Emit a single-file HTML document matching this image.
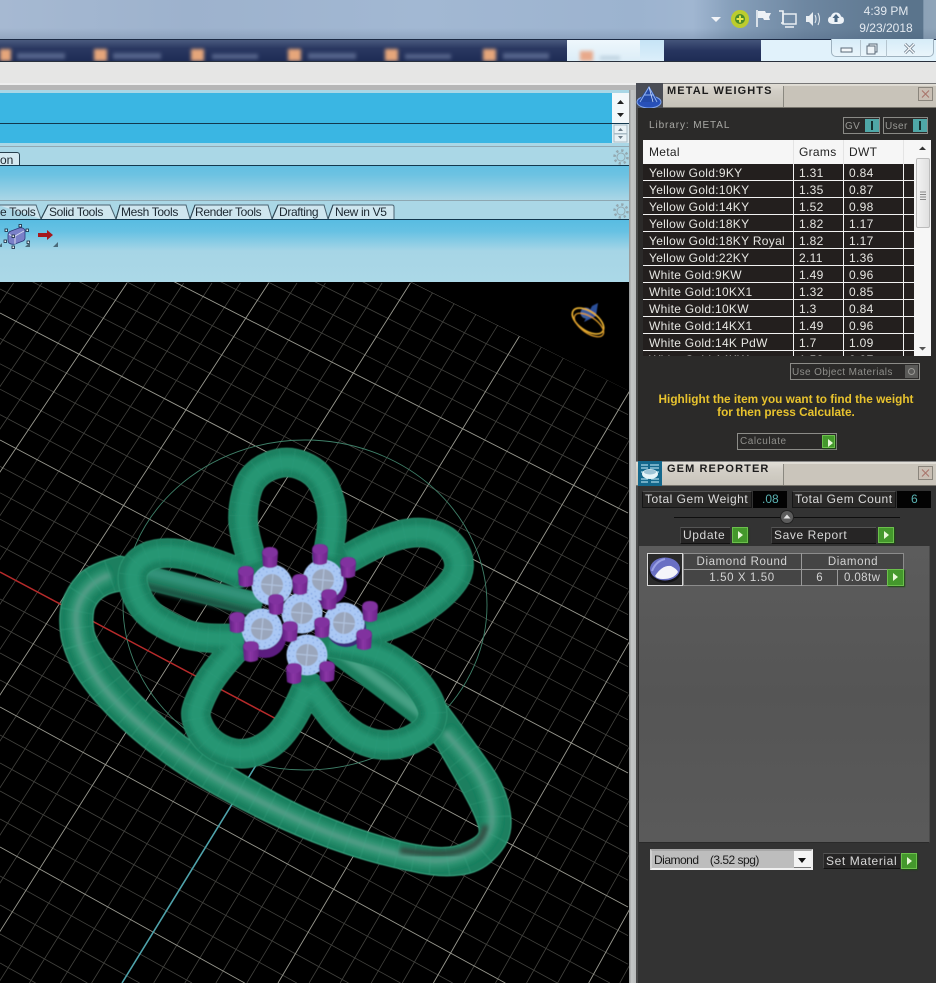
<!DOCTYPE html>
<html lang="en">
<head>
<meta charset="utf-8">
<title>Metal Weights and Gem Reporter</title>
<style>
html,body{margin:0;padding:0;background:#333;width:936px;height:983px;overflow:hidden}
#p{position:relative;width:936px;height:983px;overflow:hidden;background:#333;font-family:"Liberation Sans",Arial,sans-serif}
.b{position:absolute}
.t{position:absolute;white-space:nowrap;line-height:14px}
.tab{position:absolute;top:205px;height:14px;line-height:15px;font-size:12px;color:#1c2730;white-space:nowrap;letter-spacing:-.35px}
.r{position:absolute;white-space:nowrap;font-size:12px;letter-spacing:.3px;color:#e6e6e2;line-height:14px}
.sep{position:absolute;left:643px;width:271px;height:1px;background:#f2f2f2}
.col{position:absolute;top:164px;height:192px;width:1px;background:#f2f2f2}
.g{position:absolute;width:14px;height:14px;background:#44982c;border:1px solid #6cc04c;box-shadow:1px 1px 1px #1d4a14}
.g:after{content:"";position:absolute;left:5px;top:3px;border-left:5px solid #e8f8d8;border-top:4px solid transparent;border-bottom:4px solid transparent}
.bt{position:absolute;background:#262525;border-top:1px solid #555;border-left:1px solid #444;border-bottom:1px solid #111;color:#d8d8d8;font-size:12px;letter-spacing:.6px;line-height:15px;white-space:nowrap;padding-left:2px;box-sizing:border-box}
</style>
</head>
<body>
<div id="p">

<!-- desktop / taskbar -->
<div class="b" style="left:0;top:0;width:936px;height:39px;background:linear-gradient(90deg,#a6b9d2 0,#9db2cd 20%,#a2b8d3 45%,#9cb3cf 68%,#a0b6d1 74%,#87a0bb 78%,#6e87a1 86%,#5a748c 97%,#5a748c 98.6%,#8ca2b7 98.7%,#8fa4b8 100%)"></div>
<div class="b" style="left:0;top:28px;width:936px;height:11px;background:linear-gradient(180deg,rgba(90,110,140,0),rgba(60,80,110,.18))"></div>
<div class="b" style="left:0;top:39px;width:936px;height:1px;background:#1b2a44"></div>

<svg class="b" style="left:705px;top:6px" width="145" height="26" viewBox="0 0 145 26">
  <path d="M6 11h10l-5 5z" fill="#f2f4f8"/>
  <circle cx="35" cy="13" r="9" fill="#bccc2e"/>
  <circle cx="35" cy="13" r="5" fill="#4a8a2a"/>
  <path d="M31.500 13h7M35 9.500v7" stroke="#e9e94a" stroke-width="1.900"/>
  <path d="M52 4v17" stroke="#eef2f6" stroke-width="1.600"/>
  <path d="M53 5h7l1 2h5l-2 4 1 3h-6l-1-2h-5z" fill="#eef2f6"/>
  <rect x="78" y="8" width="13" height="10" fill="none" stroke="#e8edf2" stroke-width="1.500"/>
  <path d="M74 5h4v12h-2M80 21h9" stroke="#eef2f6" stroke-width="1.600" fill="none"/>
  <path d="M101 10h3l4-4v14l-4-4h-3z" fill="#e8edf2"/>
  <path d="M110 9q2 4 0 8M113 7q3 6 0 12" stroke="#dfe6ec" stroke-width="1.100" fill="none"/>
  <g transform="translate(4 0)">
  <path d="M125 18q-6 0-6-4 0-3 3-3.500 1-4 5-4 4 0 5 4 3 .5 3 3.500 0 4-5 4z" fill="#eef3f8"/>
  <path d="M127 8l3.500 4h-2v4h-3v-4h-2z" fill="#4b6884"/>
  </g>
</svg>
<div class="t" style="left:846px;top:4px;width:80px;text-align:center;font-size:12px;color:#e3e9f0">4:39 PM</div>
<div class="t" style="left:846px;top:21px;width:80px;text-align:center;font-size:12px;color:#e3e9f0">9/23/2018</div>

<!-- browser tab strip -->
<div class="b" style="left:0;top:40px;width:936px;height:21px;background:#e1f2fb"></div>
<div class="b" style="left:0;top:40px;width:567px;height:21px;background:linear-gradient(180deg,#4a5a7e 0,#2a3861 40%,#1e2c55 100%)"></div>
<div class="b" style="left:664px;top:40px;width:97px;height:21px;background:linear-gradient(180deg,#44547a,#27355f 50%,#1e2c55)"></div>
<div class="b" style="left:567px;top:40px;width:73px;height:21px;background:linear-gradient(180deg,#eef7fc,#dcedf7)"></div>
<div class="b" style="left:640px;top:40px;width:24px;height:21px;background:linear-gradient(180deg,#c6e4f6,#dceffa)"></div>
<svg class="b" style="left:0;top:40px" width="640" height="21" viewBox="0 0 640 21">
  <defs><filter id="bl2" x="-5%" y="-30%" width="110%" height="160%"><feGaussianBlur stdDeviation="1.800"/></filter></defs>
  <g filter="url(#bl2)">
    <g fill="#e6a67a">
      <rect x="0" y="9" width="11" height="12"/><rect x="94" y="9" width="13" height="12"/><rect x="191" y="9" width="13" height="12"/><rect x="288" y="9" width="13" height="12"/><rect x="385" y="9" width="13" height="12"/><rect x="483" y="9" width="13" height="12"/>
    </g>
    <rect x="580" y="11" width="13" height="10" fill="#e8a98a"/>
    <rect x="600" y="16" width="20" height="4" fill="#bfd3e0"/>
    <g fill="#55648a">
      <rect x="17" y="13" width="48" height="6"/><rect x="113" y="13" width="48" height="6"/><rect x="212" y="14" width="46" height="5"/><rect x="308" y="13" width="48" height="6"/><rect x="405" y="14" width="46" height="5"/><rect x="503" y="13" width="46" height="6"/>
    </g>
  </g>
</svg>
<div class="b" style="left:831px;top:39px;width:103px;height:18px;box-sizing:border-box;background:linear-gradient(180deg,#d6ecf8,#eaf5fb);border:1px solid #9fb2bf;border-top:0;border-radius:0 0 5px 5px"></div>
<div class="b" style="left:860px;top:40px;width:1px;height:17px;background:#b5c5cf"></div>
<div class="b" style="left:886px;top:40px;width:1px;height:17px;background:#b5c5cf"></div>
<svg class="b" style="left:836px;top:40px" width="90" height="17" viewBox="0 0 90 17">
  <rect x="5" y="8" width="11" height="4" fill="#f4f8fa" stroke="#5b6a78"/>
  <rect x="33" y="4" width="8" height="8" fill="#eef4f8" stroke="#5b6a78"/>
  <rect x="31" y="6" width="8" height="8" fill="#eef4f8" stroke="#5b6a78"/>
  <path d="M69 4l9 9M78 4l-9 9" stroke="#6b7a88" stroke-width="3"/>
  <path d="M69 4l9 9M78 4l-9 9" stroke="#f6f9fb" stroke-width="1.400"/>
</svg>
<div class="b" style="left:0;top:61px;width:936px;height:1px;background:#28303c"></div>
<div class="b" style="left:0;top:62px;width:636px;height:23px;background:#e6e6e5"></div>
<div class="b" style="left:636px;top:62px;width:300px;height:21px;background:#e6e6e5"></div>

<!-- ribbon -->
<div class="b" style="left:0;top:83px;width:636px;height:7px;background:linear-gradient(180deg,#eee 0,#eee 25%,#b6b6b6 30%,#b6b6b6 100%)"></div>
<div class="b" style="left:0;top:90px;width:630px;height:192px;background:#aad7e6"></div>
<div class="b" style="left:0;top:93px;width:612px;height:50px;background:#3ab6e3"></div>
<div class="b" style="left:0;top:123px;width:629px;height:1px;background:#12384e"></div>
<div class="b" style="left:612px;top:93px;width:17px;height:30px;background:#f4f8fa"></div>
<div class="b" style="left:612px;top:124px;width:17px;height:19px;background:#dfeef4"></div>
<svg class="b" style="left:612px;top:93px" width="17" height="50" viewBox="0 0 17 50">
  <path d="M5 11l3.500-4 3.500 4z" fill="#222"/><path d="M5 20l3.500 4 3.500-4z" fill="#222"/>
  <rect x="2" y="32" width="13" height="8.500" fill="#e9f2f6" stroke="#a9bcc6"/>
  <rect x="2" y="41" width="13" height="8" fill="#e9f2f6" stroke="#a9bcc6"/>
  <path d="M6 38l2.500-3 2.500 3z" fill="#6b7a86"/><path d="M6 43l2.500 3 2.500-3z" fill="#6b7a86"/>
</svg>
<div class="b" style="left:0;top:146px;width:629px;height:1px;background:#8fa8b3"></div>
<div class="b" style="left:0;top:165px;width:629px;height:1px;background:#12384e"></div>
<div class="b" style="left:0;top:166px;width:629px;height:34px;background:linear-gradient(180deg,#62bfe2,#6cc2e2 25%,#a2d3e5 90%,#aad7e6)"></div>
<div class="b" style="left:0;top:200px;width:629px;height:1px;background:#8ea7b1"></div>
<div class="b" style="left:0;top:219px;width:629px;height:1px;background:#12384e"></div>
<div class="b" style="left:0;top:220px;width:629px;height:62px;background:linear-gradient(180deg,#58bce2 0,#66c1e3 18%,#a6d5e6 50%,#abd8e7 100%)"></div>

<!-- tabs -->
<div class="b" style="left:-4px;top:152px;width:24px;height:13px;box-sizing:border-box;background:#d4e9f1;border:1px solid #27404e;border-bottom:0;border-radius:0 3px 0 0"></div>
<div class="t" style="left:0;top:153px;font-size:12px;color:#1c2730">on</div>
<svg class="b" style="left:0;top:204px" width="400" height="16" viewBox="0 0 400 16">
  <path d="M-2 1H36L41 15M41 15L48 1H110L116 15M116 15L120 1H186L190 15M190 15L195 1H268L272 15M272 15L278 1H324L328 15M328 15L333 1H392Q394 1 394 3V15" fill="#cfe6ef" stroke="#4a6270"/>
  <path d="M41 15L48 1M116 15L120 1M190 15L195 1M272 15L278 1M328 15L333 1" fill="none" stroke="#2c4452"/>
</svg>
<div class="tab" style="left:0">e Tools</div>
<div class="tab" style="left:49px">Solid Tools</div>
<div class="tab" style="left:121px">Mesh Tools</div>
<div class="tab" style="left:195px">Render Tools</div>
<div class="tab" style="left:279px">Drafting</div>
<div class="tab" style="left:335px">New in V5</div>

<!-- gears -->
<svg class="b" style="left:612px;top:148px" width="18" height="74" viewBox="0 0 18 74">
  <g fill="none" stroke="#93a8b0">
    <circle cx="9" cy="9" r="4"/><circle cx="9" cy="9" r="6.500" stroke-width="2.500" stroke-dasharray="2.300 2.800"/>
    <circle cx="9" cy="63" r="4"/><circle cx="9" cy="63" r="6.500" stroke-width="2.500" stroke-dasharray="2.300 2.800"/>
  </g>
</svg>

<!-- toolbar icons -->
<svg class="b" style="left:0;top:222px" width="62" height="30" viewBox="0 0 62 30">
  <path d="M8 13q0-3 3-4l8-3q4-1 6 2v8q0 2-2 3l-8 3q-3 1-6-1-1-1-1-3z" fill="#7a80c8" stroke="#2d3a7a" stroke-width=".8"/>
  <path d="M9 12q3 3 6 2l9-5M15 14v8" fill="none" stroke="#d4d8f0" stroke-width="1"/>
  <g fill="#e6f3f8" stroke="#12233a" stroke-width=".8">
    <rect x="19" y="2.500" width="2.500" height="2.500"/><rect x="26" y="7" width="2.500" height="2.500"/><rect x="27" y="19" width="2.500" height="2.500"/><rect x="12" y="24" width="2.500" height="2.500"/><rect x="5" y="7" width="2.500" height="2.500"/><rect x="4" y="18" width="2.500" height="2.500"/><rect x="12" y="13" width="2.500" height="2.500"/>
  </g>
  <path d="M38 11h9V8l6 5-6 5v-3h-9z" fill="#a5181c"/>
  <path d="M25 25h5v-5zM53 25h5v-5z" fill="#4a6a7a"/>
  <path d="M0 25h2v-4l-2 2z" fill="#4a6a7a"/>
</svg>

<!-- right strip -->
<div class="b" style="left:629px;top:90px;width:7px;height:893px;background:linear-gradient(90deg,#8f9292,#c4c7c7 35%,#b8baba 100%)"></div>

<!-- viewport -->
<svg class="b" style="left:0;top:282px" width="629" height="701" viewBox="0 282 629 701">
  <defs>
    <clipPath id="gc"><polygon points="0,282 411,282 629,391 629,983 0,983"/></clipPath>
    <filter id="soft" x="-5%" y="-5%" width="110%" height="110%"><feGaussianBlur stdDeviation=".45"/></filter>
    <filter id="gsoft" x="-5%" y="-5%" width="110%" height="110%"><feGaussianBlur stdDeviation=".35"/></filter>
    <filter id="hb" x="-10%" y="-10%" width="120%" height="120%"><feGaussianBlur stdDeviation="2.500"/></filter>
    <linearGradient id="pr" x1="0" x2="1" y1="0" y2="0"><stop offset="0" stop-color="#5d2080"/><stop offset=".45" stop-color="#8a35a5"/><stop offset="1" stop-color="#6a2488"/></linearGradient>
    <path id="pet" d="M253,563Q243,533 243,518Q243,503 248,488Q253,473 270,466Q287,459 303,466Q320,473 326,490Q333,507 332,520Q332,533 327,557M349,558Q380,540 400,535Q420,530 434,535Q449,540 456,553Q463,567 454,580Q445,593 428,605Q412,617 395,623Q378,630 355,635M240,573Q200,557 180,554Q160,551 147,557Q135,563 133,573Q131,583 137,596Q143,610 156,619Q170,628 186,634Q203,640 245,638M237,647Q213,673 205,689Q197,705 196,712Q195,720 202,732Q210,745 226,751Q243,757 259,750Q275,743 286,727Q297,712 307,687M330,643Q373,650 390,660Q407,670 421,688Q435,707 432,718Q430,730 416,737Q403,745 386,745Q370,745 355,736Q340,727 330,713Q320,700 310,687"/>
    <path id="bandS" d="M120,556Q90,563 78,575Q67,587 62,602Q58,617 61,637Q65,657 77,677Q90,697 111,718Q133,740 158,758Q183,777 215,795Q247,813 280,828Q313,843 346,854Q380,865 410,871Q440,878 460,875Q480,873 493,860Q507,847 510,833Q513,820 508,801Q503,783 491,766Q480,750 445,703L425,730L437,747Q462,790 471,808Q480,827 479,832Q478,837 464,843Q450,850 425,846Q400,843 356,828Q313,813 276,793Q240,773 211,755Q183,737 158,713Q133,690 115,666Q97,643 94,631Q92,620 94,610Q97,600 107,595Q117,590 140,590L140,560Z"/>
    <path id="bandC" d="M110,575Q95,580 86,591Q77,603 76,616Q76,630 80,645Q85,660 98,680Q112,700 135,720Q158,740 185,758Q212,777 246,794Q280,812 312,826Q345,840 377,849Q410,858 427,860Q445,862 461,856Q478,850 486,837Q495,825 491,807Q488,790 479,775Q470,760 445,732"/>
    <clipPath id="bc"><use href="#bandS"/></clipPath>
    <g id="prong">
      <path d="M-8,-3Q-8,-9 0,-9Q8,-9 8,-3L7,10Q0,14 -7,10Z" fill="url(#pr)"/>
      <ellipse cx="0" cy="-3.500" rx="7.500" ry="5" fill="#81309f"/>
    </g>
    <g id="stone">
      <circle r="20.500" fill="#aac8f4"/>
      <circle r="18" fill="none" stroke="#7fa3e0" stroke-width="1.400" stroke-dasharray="1.500 3.500"/>
      <circle r="14" fill="none" stroke="#7fa3e0" stroke-width="1.200" stroke-dasharray="1 5"/>
      <circle r="11" fill="#9aa6bc"/>
      <path d="M-11,-1L11,1M1,-11L-1,11" stroke="#b0c2de" stroke-width="1.200"/>
    </g>
  </defs>
  <rect x="0" y="282" width="629" height="701" fill="#000"/>
  <g clip-path="url(#gc)" fill="none">
    <g filter="url(#gsoft)">
    <path stroke="#42423e" stroke-width=".8" d="M13.600,283L-467.700,983M42,283L-436.600,983M70.300,283L-405.500,983M98.700,283L-374.500,983M155.300,283L-312.300,983M183.700,283L-281.300,983M212,283L-250.200,983M240.400,283L-219.100,983M297,283L-157,983M325.400,283L-125.900,983M353.700,283L-94.800,983M382.100,283L-63.800,983M438.700,283L-1.600,983M467.100,283L29.400,983M495.400,283L60.500,983M523.800,283L91.600,983M580.400,283L153.700,983M608.800,283L184.800,983M637.100,283L215.900,983M665.500,283L246.900,983M722.100,283L309.100,983M750.500,283L340.100,983M778.800,283L371.200,983M807.200,283L402.300,983M863.800,283L464.400,983M892.200,283L495.500,983M920.500,283L526.600,983M948.900,283L557.600,983M1005.500,283L619.800,983"/>
    <path stroke="#42423e" stroke-width=".8" d="M0,100.200L628,414.600M0,123.400L628,439.200M0,146.600L628,463.800M0,169.800L628,488.400M0,217L628,538.400M0,241L628,563.800M0,265L628,589.200M0,289L628,614.600M0,338.400L628,666.600M0,363.800L628,693.200M0,389.200L628,719.800M0,414.600L628,746.400M0,466.400L628,799.800M0,492.800L628,826.600M0,519.200L628,853.400M0,545.600L628,880.200M0,599L628,935.600M0,626L628,964.200M0,653L609.900,983M0,680L557.400,983M0,735L452.700,983M0,763L400.500,983M0,791L348.500,983M0,819L296.800,983M0,876L192,983M0,905L139.600,983M0,934L87.400,983M0,963L35.600,983"/>
    <path stroke="#9a9a90" stroke-width=".9" d="M127,283L-343.400,983M268.700,283L-188,983M410.400,283L-32.700,983M552.100,283L282.600,722M693.800,283L278,983M835.500,283L433.400,983M977.200,283L588.700,983M0,77L628,390M0,193L628,513M0,313L628,640M0,440L628,773M282,722L628,907M0,707L505.300,983M0,847L244.700,983"/>
    </g>
    <path stroke="#b62a2a" stroke-width="1.500" d="M0,572L282,722"/>
    <path stroke="#4fa3ab" stroke-width="1.600" d="M282.600,722L122,983"/>
  </g>
  <ellipse cx="305" cy="605" rx="182" ry="165" fill="none" stroke="#3f8069" stroke-width=".9"/>

  <g fill="none" stroke-linejoin="round" filter="url(#soft)">
    <!-- back band segments -->
    <path d="M132,574L262,606" stroke="#237f61" stroke-width="24"/>
    <path d="M132,568L262,600" stroke="#33937a" stroke-width="9" filter="url(#hb)"/>
    <path d="M132,583L262,615" stroke="#1d4f40" stroke-width="6" filter="url(#hb)"/>
    <path d="M455,738L325,640" stroke="#1b7f5e" stroke-width="28"/>
    <path d="M455,738L325,640" stroke="#46a185" stroke-width="11" filter="url(#hb)"/>

    <!-- band -->
    <use href="#bandS" fill="#1a7f5e" stroke="#3aa883" stroke-width="1"/>
    <g clip-path="url(#bc)">
      <use href="#bandC" stroke="#2a9270" stroke-width="17" filter="url(#hb)"/>
      <use href="#bandC" stroke="#5a9f8b" stroke-width="5" filter="url(#hb)"/>
      <use href="#bandC" stroke="#45b08e" stroke-width="48" stroke-dasharray="1 16" opacity=".3"/>
      <path d="M400,850Q450,858 470,847Q484,840 485,825" stroke="#33483f" stroke-width="6" filter="url(#hb)"/>
    </g>
    <!-- petals -->
    <use href="#pet" stroke="#38a881" stroke-width="29.500" stroke-linecap="round"/>
    <use href="#pet" stroke="#1b8060" stroke-width="28.500" stroke-linecap="round"/>
    <use href="#pet" stroke="#279673" stroke-width="15" filter="url(#hb)"/>
    <use href="#pet" stroke="#36a582" stroke-width="27" stroke-dasharray="1 11" opacity=".22"/>
  </g>

  <!-- stones -->
  <g filter="url(#soft)">
    <ellipse cx="265" cy="638" rx="21" ry="20" fill="#5c1a80"/>
    <ellipse cx="326" cy="586" rx="21" ry="20" fill="#5c1a80"/>
    <ellipse cx="346" cy="628" rx="20" ry="19" fill="#3a2a7a"/>
    <use href="#stone" x="272" y="585"/>
    <use href="#stone" x="323" y="580"/>
    <use href="#stone" x="302" y="613"/>
    <use href="#stone" x="262" y="629"/>
    <use href="#stone" x="344" y="623"/>
    <use href="#stone" x="307" y="655"/>
    <use href="#prong" x="270" y="556"/>
    <use href="#prong" x="246" y="575"/>
    <use href="#prong" x="320" y="553"/>
    <use href="#prong" x="348" y="566"/>
    <use href="#prong" x="300" y="583"/>
    <use href="#prong" x="276" y="603"/>
    <use href="#prong" x="329" y="598"/>
    <use href="#prong" x="370" y="610"/>
    <use href="#prong" x="237" y="621"/>
    <use href="#prong" x="290" y="630"/>
    <use href="#prong" x="322" y="626"/>
    <use href="#prong" x="364" y="638"/>
    <use href="#prong" x="251" y="650"/>
    <use href="#prong" x="294" y="672"/>
    <use href="#prong" x="327" y="670"/>
  </g>

  <!-- mini ring -->
  <g fill="none" filter="url(#soft)">
    <path d="M584,322L592,306L598,303L596,316Z" fill="#2c4f9a"/>
    <circle cx="586" cy="313" r="5.500" fill="#3a5f9e"/>
    <ellipse cx="588" cy="321" rx="18" ry="9.500" transform="rotate(35 588 321)" stroke="#e8b030" stroke-width="1.700"/>
    <ellipse cx="589" cy="325" rx="17" ry="8" transform="rotate(35 589 325)" stroke="#d9982a" stroke-width="1.300"/>
  </g>
</svg>

<!-- METAL WEIGHTS header -->
<div class="b" style="left:636px;top:83px;width:300px;height:25px;background:linear-gradient(180deg,#e1ded6,#d2cec6 30%,#c6c2b8);border-top:1px solid #777;box-sizing:border-box;border-bottom:1px solid #77746c"></div>
<div class="b" style="left:783px;top:86px;width:153px;height:21px;background:#c8c3b9;border-left:1px solid #8a8880;box-sizing:border-box"></div>
<svg class="b" style="left:636px;top:83px" width="27" height="26" viewBox="0 0 27 26">
  <rect width="27" height="26" fill="#4a4d55"/>
  <ellipse cx="13" cy="19" rx="12" ry="6" fill="#2850b8" stroke="#7fa4ee"/>
  <path d="M2 19L13 3l10 16z" fill="#244aa8"/>
  <path d="M4 19L13 4l8 15M8 12h10" fill="none" stroke="#8fb2f2" stroke-width="1"/>
  <path d="M13 4l4 15" stroke="#dbe6ff" stroke-width=".7"/>
</svg>
<div class="t" style="left:667px;top:84px;font-size:11px;font-weight:bold;letter-spacing:1.100px;color:#1c1c1c">METAL WEIGHTS</div>
<svg class="b" style="left:918px;top:87px" width="16" height="15" viewBox="0 0 16 15">
  <rect x=".5" y=".5" width="14" height="13" fill="#c9bfb4" stroke="#8a857c"/>
  <path d="M4 3.500l7 7M11 3.500l-7 7" stroke="#a9766c" stroke-width="1.100"/>
</svg>

<!-- metal panel -->
<div class="b" style="left:638px;top:108px;width:298px;height:353px;background:#2b2a29"></div>
<div class="b" style="left:636px;top:108px;width:2px;height:875px;background:#4a4a4a"></div>
<div class="t" style="left:649px;top:119px;font-size:10px;letter-spacing:.9px;color:#a9a9a5">Library: METAL</div>
<div class="b" style="left:843px;top:117px;width:37px;height:17px;box-sizing:border-box;border:1px solid #8a8a86"></div>
<div class="b" style="left:883px;top:117px;width:45px;height:17px;box-sizing:border-box;border:1px solid #8a8a86"></div>
<div class="t" style="left:845px;top:120px;font-size:10px;letter-spacing:.4px;color:#9a9a96">GV</div>
<div class="t" style="left:885px;top:120px;font-size:10px;letter-spacing:.4px;color:#9a9a96">User</div>
<div class="b" style="left:865px;top:119px;width:14px;height:13px;background:#4fa7a7"></div>
<div class="b" style="left:913px;top:119px;width:14px;height:13px;background:#4fa7a7"></div>
<div class="b" style="left:871px;top:121px;width:2px;height:9px;background:#14302f"></div>
<div class="b" style="left:919px;top:121px;width:2px;height:9px;background:#14302f"></div>

<!-- table -->
<div class="b" style="left:643px;top:140px;width:288px;height:216px;background:#f6f6f6"></div>
<div class="b" style="left:643px;top:164px;width:271px;height:192px;background:#231f1e"></div>
<div class="b" style="left:793px;top:140px;width:1px;height:24px;background:#e4e4e4"></div>
<div class="b" style="left:843px;top:140px;width:1px;height:24px;background:#e4e4e4"></div>
<div class="b" style="left:903px;top:140px;width:1px;height:24px;background:#e4e4e4"></div>
<div class="t" style="left:649px;top:145px;font-size:12px;letter-spacing:.3px;color:#222">Metal</div>
<div class="t" style="left:799px;top:145px;font-size:12px;letter-spacing:.3px;color:#222">Grams</div>
<div class="t" style="left:849px;top:145px;font-size:12px;letter-spacing:.3px;color:#222">DWT</div>
<div class="col" style="left:793px"></div><div class="col" style="left:843px"></div><div class="col" style="left:903px"></div>
<div class="sep" style="top:180px"></div><div class="sep" style="top:197px"></div><div class="sep" style="top:214px"></div><div class="sep" style="top:231px"></div><div class="sep" style="top:248px"></div><div class="sep" style="top:265px"></div><div class="sep" style="top:282px"></div><div class="sep" style="top:299px"></div><div class="sep" style="top:316px"></div><div class="sep" style="top:333px"></div><div class="sep" style="top:350px"></div>

<div class="r" style="left:649px;top:166px">Yellow Gold:9KY</div><div class="r" style="left:799px;top:166px">1.31</div><div class="r" style="left:849px;top:166px">0.84</div>
<div class="r" style="left:649px;top:183px">Yellow Gold:10KY</div><div class="r" style="left:799px;top:183px">1.35</div><div class="r" style="left:849px;top:183px">0.87</div>
<div class="r" style="left:649px;top:200px">Yellow Gold:14KY</div><div class="r" style="left:799px;top:200px">1.52</div><div class="r" style="left:849px;top:200px">0.98</div>
<div class="r" style="left:649px;top:217px">Yellow Gold:18KY</div><div class="r" style="left:799px;top:217px">1.82</div><div class="r" style="left:849px;top:217px">1.17</div>
<div class="r" style="left:649px;top:234px">Yellow Gold:18KY Royal</div><div class="r" style="left:799px;top:234px">1.82</div><div class="r" style="left:849px;top:234px">1.17</div>
<div class="r" style="left:649px;top:251px">Yellow Gold:22KY</div><div class="r" style="left:799px;top:251px">2.11</div><div class="r" style="left:849px;top:251px">1.36</div>
<div class="r" style="left:649px;top:268px">White Gold:9KW</div><div class="r" style="left:799px;top:268px">1.49</div><div class="r" style="left:849px;top:268px">0.96</div>
<div class="r" style="left:649px;top:285px">White Gold:10KX1</div><div class="r" style="left:799px;top:285px">1.32</div><div class="r" style="left:849px;top:285px">0.85</div>
<div class="r" style="left:649px;top:302px">White Gold:10KW</div><div class="r" style="left:799px;top:302px">1.3</div><div class="r" style="left:849px;top:302px">0.84</div>
<div class="r" style="left:649px;top:319px">White Gold:14KX1</div><div class="r" style="left:799px;top:319px">1.49</div><div class="r" style="left:849px;top:319px">0.96</div>
<div class="r" style="left:649px;top:336px">White Gold:14K PdW</div><div class="r" style="left:799px;top:336px">1.7</div><div class="r" style="left:849px;top:336px">1.09</div>
<div class="b" style="left:643px;top:351px;width:271px;height:5px;overflow:hidden">
  <div class="r" style="left:6px;top:2px">White Gold:14KW</div><div class="r" style="left:156px;top:2px">1.52</div><div class="r" style="left:206px;top:2px">0.97</div>
</div>
<div class="b" style="left:643px;top:356px;width:288px;height:4px;background:#2b2a29"></div>

<!-- scrollbar -->
<div class="b" style="left:916px;top:158px;width:14px;height:70px;box-sizing:border-box;background:linear-gradient(90deg,#f2f2f2,#e0e0e0);border:1px solid #bcbcbc;border-radius:2px"></div>
<svg class="b" style="left:914px;top:140px" width="17" height="216" viewBox="0 0 17 216">
  <path d="M5 10l3.500-3.500 3.500 3.500z" fill="#333"/>
  <path d="M5 207l3.500 3.500 3.500-3.500z" fill="#555"/>
  <path d="M6 52h6M6 54.500h6M6 57h6M6 59.500h6" stroke="#888" stroke-width="1"/>
</svg>

<!-- use object materials -->
<div class="b" style="left:790px;top:363px;width:130px;height:17px;box-sizing:border-box;border:1px solid #8c8c88"></div>
<div class="t" style="left:792px;top:366px;font-size:10px;letter-spacing:.4px;color:#8f8f8b">Use Object Materials</div>
<div class="b" style="left:905px;top:365px;width:13px;height:13px;background:#5a5a58"></div>
<div class="b" style="left:908px;top:368px;width:7px;height:7px;box-sizing:border-box;border:1px solid #9a9a96;border-radius:50%"></div>

<div class="t" style="left:636px;top:392px;width:300px;text-align:center;font-size:11.800px;font-weight:bold;color:#e8c32e">Highlight the item you want to find the weight</div>
<div class="t" style="left:636px;top:405px;width:300px;text-align:center;font-size:11.800px;font-weight:bold;color:#e8c32e">for then press Calculate.</div>

<div class="b" style="left:737px;top:433px;width:100px;height:17px;box-sizing:border-box;border:1px solid #8c8c88;background:#2a2928"></div>
<div class="t" style="left:740px;top:435px;font-size:10px;letter-spacing:.55px;color:#8f8f8b">Calculate</div>
<div class="g" style="left:822px;top:435px;width:11px;height:11px"></div>

<!-- GEM REPORTER header -->
<div class="b" style="left:636px;top:461px;width:300px;height:25px;background:linear-gradient(180deg,#e2dfd8,#d4d0c8 30%,#c8c4ba);border-top:1px solid #888;box-sizing:border-box;border-bottom:1px solid #77746c"></div>
<div class="b" style="left:783px;top:464px;width:153px;height:21px;background:#cac5bb;border-left:1px solid #8a8880;box-sizing:border-box"></div>
<svg class="b" style="left:638px;top:461px" width="24" height="25" viewBox="0 0 24 25">
  <rect width="24" height="25" fill="#14688c"/>
  <path d="M3 4h7M12 4h9M3 7h7M12 7h9M3 18h7M13 18h8M3 21h7M13 21h8M3 11h3M18 11h3" stroke="#a9d8e8" stroke-width="1.200"/>
  <ellipse cx="12" cy="13" rx="8" ry="5" fill="#e6f4f8"/>
  <ellipse cx="12" cy="11" rx="6" ry="2.500" fill="#9fc4d6"/>
</svg>
<div class="t" style="left:667px;top:462px;font-size:11px;font-weight:bold;letter-spacing:1.100px;color:#1c1c1c">GEM REPORTER</div>
<svg class="b" style="left:918px;top:466px" width="16" height="15" viewBox="0 0 16 15">
  <rect x=".5" y=".5" width="14" height="13" fill="#c9bfb4" stroke="#8a857c"/>
  <path d="M4 3.500l7 7M11 3.500l-7 7" stroke="#a9766c" stroke-width="1.100"/>
</svg>

<!-- gem totals -->
<div class="b" style="left:642px;top:491px;width:110px;height:17px;box-sizing:border-box;background:#2a2928;border:1px solid #151515;border-top-color:#555"></div>
<div class="b" style="left:753px;top:491px;width:34px;height:17px;background:#030303"></div>
<div class="b" style="left:792px;top:491px;width:104px;height:17px;box-sizing:border-box;background:#2a2928;border:1px solid #151515;border-top-color:#555"></div>
<div class="b" style="left:897px;top:491px;width:34px;height:17px;background:#030303"></div>
<div class="t" style="left:645px;top:492px;font-size:12px;letter-spacing:.5px;color:#dcdcdc">Total Gem Weight</div>
<div class="t" style="left:795px;top:492px;font-size:12px;letter-spacing:.5px;color:#dcdcdc">Total Gem Count</div>
<div class="t" style="left:762px;top:492px;font-size:12px;color:#5ab3b3">.08</div>
<div class="t" style="left:911px;top:492px;font-size:12px;color:#5ab3b3">6</div>

<!-- slider -->
<div class="b" style="left:674px;top:517px;width:226px;height:1px;background:#0e0e0e"></div>
<svg class="b" style="left:779px;top:509px" width="16" height="16" viewBox="0 0 16 16">
  <circle cx="8" cy="8" r="6.500" fill="#5c5c5c" stroke="#222"/>
  <path d="M4.500 9.500L8 5.500l3.500 4z" fill="#e4e4e4"/>
</svg>

<!-- buttons -->
<div class="bt" style="left:680px;top:527px;width:50px;height:17px">Update</div>
<div class="g" style="left:732px;top:527px"></div>
<div class="bt" style="left:771px;top:527px;width:105px;height:17px">Save Report</div>
<div class="g" style="left:878px;top:527px"></div>

<!-- gem list -->
<div class="b" style="left:639px;top:546px;width:291px;height:297px;background:linear-gradient(180deg,#5c5c5c,#555 50%,#5a5a5a);border-right:1px solid #4a4a4a;border-bottom:1px solid #2a2a2a;box-sizing:border-box"></div>
<div class="b" style="left:647px;top:553px;width:36px;height:33px;box-sizing:border-box;border:1px solid #d8d8d8;background:#2a2a2a"></div>
<svg class="b" style="left:648px;top:554px" width="34" height="31" viewBox="0 0 34 31">
  <ellipse cx="17" cy="18" rx="16" ry="11" fill="#141418"/>
  <ellipse cx="17" cy="15" rx="15" ry="11.500" fill="#6a70c4"/>
  <path d="M7 22Q14 11 23 12Q29 15 30 18Q26 25 15 25Q9 25 7 22Z" fill="#f4f4fa"/>
  <path d="M4 17Q8 7 17 5" fill="none" stroke="#9aa0e4" stroke-width="2"/>
</svg>
<div class="b" style="left:683px;top:553px;width:221px;height:33px;box-sizing:border-box;border:1px solid #8c8c8c;background:#454545"></div>
<div class="b" style="left:683px;top:569px;width:221px;height:1px;background:#9a9a9a"></div>
<div class="b" style="left:801px;top:553px;width:1px;height:33px;background:#9a9a9a"></div>
<div class="b" style="left:837px;top:570px;width:1px;height:16px;background:#9a9a9a"></div>
<div class="t" style="left:683px;top:555px;width:118px;text-align:center;font-size:11.500px;letter-spacing:.6px;color:#d4d4d4">Diamond Round</div>
<div class="t" style="left:802px;top:555px;width:102px;text-align:center;font-size:11.500px;letter-spacing:.6px;color:#d4d4d4">Diamond</div>
<div class="t" style="left:683px;top:571px;width:118px;text-align:center;font-size:11.500px;letter-spacing:.6px;color:#d4d4d4">1.50 X 1.50</div>
<div class="t" style="left:802px;top:571px;width:35px;text-align:center;font-size:11.500px;color:#d4d4d4">6</div>
<div class="t" style="left:844px;top:571px;font-size:11.500px;letter-spacing:.4px;color:#d4d4d4">0.08tw</div>
<div class="g" style="left:887px;top:569px;width:15px;height:15px"></div>

<!-- bottom controls -->
<div class="b" style="left:650px;top:849px;width:163px;height:21px;box-sizing:border-box;background:#bdbdbd;border:2px solid #f0f0f0;border-top-color:#a8a8a8;border-left-color:#cfcfcf"></div>
<div class="t" style="left:654px;top:853px;font-size:12px;letter-spacing:-.5px;color:#1b1b1b;white-space:pre">Diamond    (3.52 spg)</div>
<div class="b" style="left:794px;top:851px;width:17px;height:17px;background:#f4f4f4;border-bottom:1px solid #777;box-sizing:border-box"></div>
<div class="b" style="left:798px;top:858px;border-top:5px solid #111;border-left:4px solid transparent;border-right:4px solid transparent"></div>
<div class="bt" style="left:823px;top:853px;width:77px;height:16px;line-height:15px">Set Material</div>
<div class="g" style="left:901px;top:853px"></div>

</div>
</body>
</html>
